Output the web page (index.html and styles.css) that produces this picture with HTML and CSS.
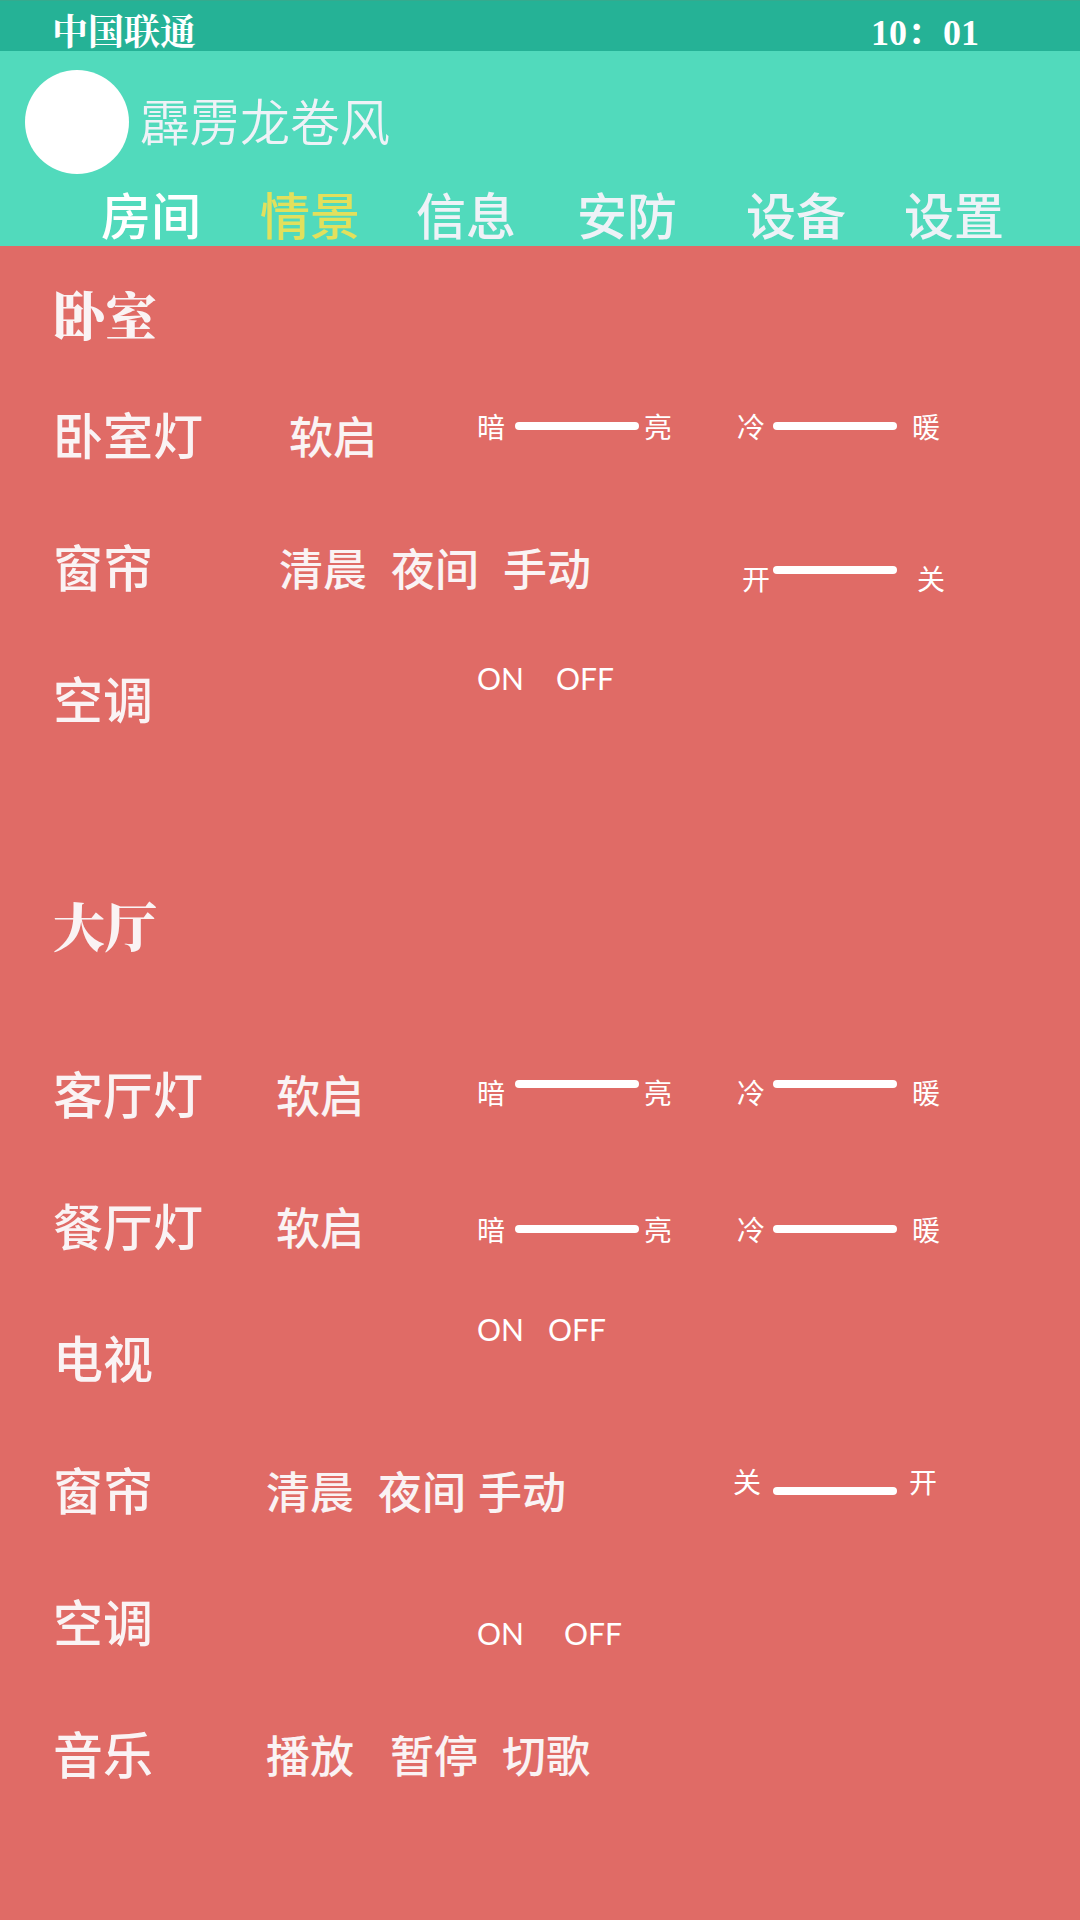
FILE: index.html
```html
<!DOCTYPE html>
<html lang="zh-CN">
<head>
<meta charset="utf-8">
<meta name="viewport" content="width=device-width, initial-scale=1">
<title>情景</title>
<link rel="stylesheet" href="styles.css">
</head>
<body>
<div class="status">
  <span>中国联通</span>
  <time datetime="10:01">10：01</time>
</div>
<header class="header">
  <div class="profile">
    <span class="avatar"></span>
    <span class="name">霹雳龙卷风</span>
  </div>
  <nav class="tabs">
    <a class="strong" href="#rooms">房间</a>
    <a class="active" href="#scenes" aria-current="page">情景</a>
    <a href="#messages">信息</a>
    <a href="#security">安防</a>
    <a href="#devices">设备</a>
    <a href="#settings">设置</a>
  </nav>
</header>
<main>
  <section class="room bedroom">
    <h2>卧室</h2>
    <div class="device">
      <h3>卧室灯</h3>
      <div class="actions lamp"><button type="button">软启</button></div>
      <div class="field dimmer lift-s"><label for="bed-dim">暗</label><input id="bed-dim" type="range"><label for="bed-dim">亮</label></div>
      <div class="field lift-s"><label for="bed-tone">冷</label><input id="bed-tone" type="range"><label for="bed-tone">暖</label></div>
    </div>
    <div class="device">
      <h3>窗帘</h3>
      <div class="actions wide"><button type="button">清晨</button><button type="button">夜间</button><button type="button">手动</button></div>
      <div class="field inset drop-s track-above"><label for="bed-curtain">开</label><input id="bed-curtain" type="range"><label for="bed-curtain">关</label></div>
    </div>
    <div class="device">
      <h3>空调</h3>
      <div class="power lift-m gap-m"><button type="button">ON</button><button type="button">OFF</button></div>
    </div>
  </section>
  <section class="room hall">
    <h2>大厅</h2>
    <div class="device">
      <h3>客厅灯</h3>
      <div class="actions lamp"><button type="button">软启</button></div>
      <div class="field dimmer lift-xs track-above"><label for="living-dim">暗</label><input id="living-dim" type="range"><label for="living-dim">亮</label></div>
      <div class="field lift-xs track-above"><label for="living-tone">冷</label><input id="living-tone" type="range"><label for="living-tone">暖</label></div>
    </div>
    <div class="device">
      <h3>餐厅灯</h3>
      <div class="actions lamp"><button type="button">软启</button></div>
      <div class="field dimmer drop-xs"><label for="dining-dim">暗</label><input id="dining-dim" type="range"><label for="dining-dim">亮</label></div>
      <div class="field drop-xs"><label for="dining-tone">冷</label><input id="dining-tone" type="range"><label for="dining-tone">暖</label></div>
    </div>
    <div class="device">
      <h3>电视</h3>
      <div class="power lift-l gap-s"><button type="button">ON</button><button type="button">OFF</button></div>
    </div>
    <div class="device">
      <h3>窗帘</h3>
      <div class="actions wide tight-end"><button type="button">清晨</button><button type="button">夜间</button><button type="button">手动</button></div>
      <div class="field outset lift-s track-below"><label for="hall-curtain">关</label><input id="hall-curtain" type="range"><label for="hall-curtain">开</label></div>
    </div>
    <div class="device">
      <h3>空调</h3>
      <div class="power drop-s gap-l"><button type="button">ON</button><button type="button">OFF</button></div>
    </div>
    <div class="device">
      <h3>音乐</h3>
      <div class="actions wide loose-start"><button type="button">播放</button><button type="button">暂停</button><button type="button">切歌</button></div>
    </div>
  </section>
</main>
</body>
</html>
```
FILE: styles.css
```css
* {
  box-sizing: border-box;
}

body {
  margin: 0;
  min-height: 100vh;
  background: #e06b66;
  color: #faf3f4;
  font-family: "Noto Sans CJK SC", sans-serif;
}

h2,
h3 {
  margin: 0;
}

button {
  padding: 0;
  border: 0;
  background: none;
  color: inherit;
  font: inherit;
  cursor: pointer;
}

/* Status bar */
.status {
  display: flex;
  justify-content: space-between;
  align-items: flex-end;
  height: 51px;
  padding: 0 101px 0 52px;
  border-top: 1px solid #35aa8e;
  background: #25b296;
  color: #fff;
  font: bold 36px/36px "Liberation Serif", "Noto Serif CJK SC", "Noto Sans CJK SC", serif;
}

/* Profile and tabs */
.header {
  padding: 19px 0 3px;
  background: #51dabc;
  color: #eef2f7;
}

.profile {
  display: flex;
  align-items: center;
  gap: 11px;
  padding-left: 25px;
}

.avatar {
  width: 104px;
  height: 104px;
  border-radius: 50%;
  background: #fff;
}

.name {
  padding-bottom: 6px;
  font-size: 50px;
  font-weight: 350;
  line-height: 60px;
}

.tabs {
  display: grid;
  grid-template-columns: 159fr 156fr 161fr 169fr 158fr 176fr;
  padding: 9px 0 0 101px;
  font-size: 50px;
  font-weight: 500;
  line-height: 60px;
}

.tabs a {
  color: inherit;
  text-decoration: none;
}

.tabs .strong {
  color: #fff;
}

.tabs .active {
  color: #e2e05c;
}

/* Rooms */
.room h2 {
  display: flex;
  align-items: center;
  height: 124px;
  padding: 12px 0 0 53px;
  font: 900 52px/60px "Noto Serif CJK SC", "Noto Sans CJK SC", serif;
}

.hall h2 {
  height: 263px;
  padding-top: 54px;
}

.device {
  display: grid;
  grid-template-columns: 213fr 211fr 260fr 343fr;
  align-items: center;
  height: 132px;
  padding-left: 53px;
}

.device h3 {
  padding-bottom: 6px;
  font-size: 50px;
  font-weight: 500;
  line-height: 60px;
}

.actions {
  display: flex;
  gap: 24px;
  padding-bottom: 2px;
  font-size: 44px;
  font-weight: 500;
  line-height: 60px;
}

.actions.wide {
  grid-column: span 2;
}

.bedroom .actions {
  margin-left: 13px;
}

.actions.lamp {
  padding-left: 10px;
}

.tight-end button:last-child {
  margin-left: -12px;
}

.loose-start button:first-child {
  margin-right: 12px;
}

.power {
  grid-column: 3;
  display: flex;
  color: #fff;
  font: 30px/40px Lato, sans-serif;
}

.gap-s {
  gap: 24px;
}

.gap-m {
  gap: 32px;
}

.gap-l {
  gap: 40px;
}

/* Sliders with a word at each end */
.field {
  display: grid;
  grid-template-columns: 36px 124px 1fr;
  align-items: center;
  color: #fff;
  font-size: 28px;
  line-height: 40px;
}

.field label:last-child {
  padding-left: 15px;
}

.field.dimmer {
  grid-template-columns: 38px 124px 1fr;
}

.dimmer label:last-child {
  padding-left: 5px;
}

.inset label:first-child {
  padding-left: 5px;
}

.inset label:last-child {
  padding-left: 20px;
}

.field.outset {
  grid-template-columns: 40px 124px 1fr;
  margin-left: -4px;
}

.outset label:last-child {
  padding-left: 12px;
}

.field input {
  appearance: none;
  width: 124px;
  height: 8px;
  margin: 0;
  border-radius: 4px;
  background: #fff;
}

.field input::-webkit-slider-thumb {
  appearance: none;
  width: 8px;
  height: 8px;
  border-radius: 50%;
  background: #fff;
}

.track-above input {
  margin-bottom: 16px;
}

.track-below input {
  margin-top: 20px;
}

.lift-xs {
  padding-bottom: 6px;
}

.lift-s {
  padding-bottom: 20px;
}

.lift-m {
  padding-bottom: 44px;
}

.lift-l {
  padding-bottom: 60px;
}

.drop-xs {
  padding-top: 4px;
}

.drop-s {
  padding-top: 20px;
}
```
